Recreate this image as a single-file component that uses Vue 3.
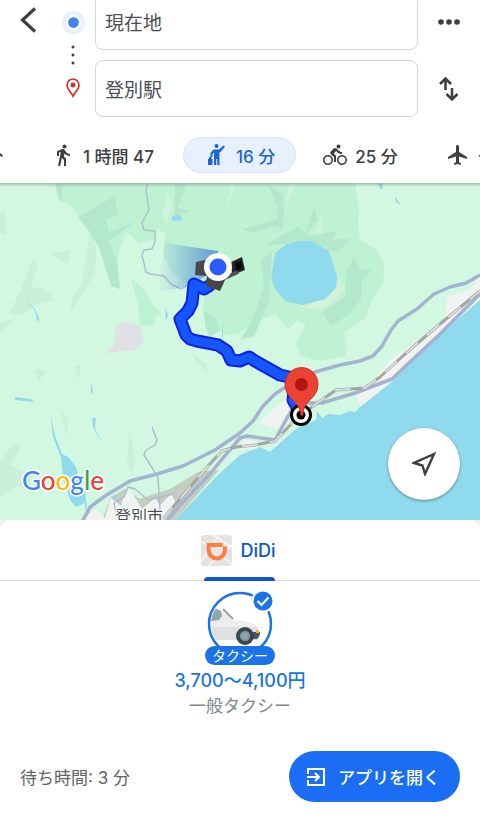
<template>
  <div class="directions">
    <header class="search-panel">
      <div class="endpoints">
        <button class="icon-btn back-btn" aria-label="戻る">
          <svg width="16" height="26" viewBox="0 0 16 26">
            <path d="M15 1.500 L2.500 13 L15 24.500" fill="none" stroke="currentColor" stroke-width="3.200" />
          </svg>
        </button>

        <div class="markers">
          <span class="origin-dot"></span>
          <svg class="dots" width="4" height="20" viewBox="0 0 4 20">
            <circle v-for="y in [2, 10, 18]" :key="y" cx="2" :cy="y" r="1.5" fill="#3c4043" />
          </svg>
          <svg width="14" height="20" viewBox="0 0 14 20">
            <path d="M7 18 C5 14 1 11 1 7 A6 6 0 0 1 13 7 C13 11 9 14 7 18 Z" fill="none" stroke="#d93025" stroke-width="1.7" />
            <circle cx="7" cy="7" r="2.5" fill="#d93025" />
          </svg>
        </div>

        <div class="fields">
          <input v-model="origin" type="text" aria-label="出発地" />
          <input v-model="destination" type="text" aria-label="目的地" />
        </div>

        <div class="field-actions">
          <button class="icon-btn" aria-label="その他">
            <svg width="22" height="6" viewBox="0 0 22 6">
              <circle v-for="x in [3, 11, 19]" :key="x" :cx="x" cy="3" r="2.8" fill="currentColor" />
            </svg>
          </button>
          <button class="icon-btn" aria-label="入れ替え">
            <svg width="20" height="26" viewBox="0 0 20 26" fill="none" stroke="currentColor" stroke-width="2.6">
              <path d="M6.500 14 V2.500 M1 8 L6.500 2.500 L12 8" />
              <path d="M13 12 V23.500 M7.500 18 L13 23.500 L18.500 18" />
            </svg>
          </button>
        </div>
      </div>

      <nav class="modes">
        <button
          v-for="mode in modes"
          :key="mode.id"
          class="mode"
          :class="[mode.id, { active: mode.id === selectedMode }]"
          :aria-label="mode.name"
          @click="selectedMode = mode.id"
        >
          <svg width="24" height="24" viewBox="0 0 24 24" fill="currentColor">
            <path :d="mode.icon" />
          </svg>
          <span v-if="mode.time">{{ mode.time }}</span>
        </button>
      </nav>
    </header>

    <main class="map">
      <svg class="map-canvas" viewBox="0 183 480 337" role="img" aria-label="地図">
        <defs>
          <linearGradient id="beam" x1="0" x2="1" y1="0" y2="0">
            <stop offset="0" stop-color="#4a86df" stop-opacity="0" />
            <stop offset="1" stop-color="#3f7bdc" stop-opacity="0.75" />
          </linearGradient>
          <linearGradient id="shade" x1="0" x2="0" y1="0" y2="1">
            <stop offset="0" stop-color="#54725f" stop-opacity="0.4" />
            <stop offset="1" stop-color="#54725f" stop-opacity="0" />
          </linearGradient>
        </defs>
        <rect y="183" width="480" height="337" fill="#d2f8e1" />

        <!-- forest -->
        <g fill="#bff1d3">
          <path d="M55 183 L60 200 L73 208 L80 220 L90 232 L98 245 L104 262 L111 286 L120 289 L116 264 L121 246 L126 232 L139 243 L155 239 L158 228 L165 234 L163 255 L170 270 L190 288 L205 285 L203 310 L212 325 L225 335 L240 333 L257 321 L275 314 L288 329 L298 320 L305 325 L296 343 L300 356 L320 361 L345 356 L347 345 L344 333 L365 318 L372 300 L383 283 L384 262 L376 250 L360 240 L358 222 L359 211 L355 183 Z" />
          <path d="M131 278 L145 290 L151 302 L162 314 L155 316 L155 325 L140 326 L138 305 Z" />
        </g>
        <g fill="#b3e8cc">
          <path d="M79 217 L90 210 L115 196 L118 214 L106 220 L109 232 L137 221 L109 240 L117 262 L120 289 L111 286 L99 247 L88 230 Z" />
          <path d="M268 185 L283 194 L284 211 L282 230 L276 226 L252 233 L243 229 L278 219 L277 205 Z" />
          <path d="M265 245 L298 227 L309 236 L337 231 L332 240 L351 238 L338 252 L329 250 L312 241 L298 241 L284 244 Z" />
          <path d="M314 208 L318 220 L306 233 Z" />
          <path d="M261 260 L272 252 L269 300 L254 337 L240 339 L250 325 L264 288 Z" />
          <path d="M354 257 L361 270 L372 270 L362 280 L361 299 L350 314 L330 326 L323 312 L345 297 L347 270 Z" />
          <path d="M175 184 L186 184 L178 208 L190 211 L174 217 Z" />
          <path d="M203 310 L216 318 L220 330 L210 337 L206 329 Z" />
          <path d="M55 183 L63 183 L62 202 L58 198 Z" />
        </g>
        <g fill="#c9f0d9">
          <path d="M90 230 L96 248 L95 273 L71 312 L72 297 L82 283 Z" />
          <path d="M50 254 L70 250 L69 264 Z" />
          <path d="M32 259 L38 266 L31 288 L43 287 L55 300 L35 305 L22 315 L10 313 L23 285 Z" />
          <path d="M0 213 L5 212 L6 235 L0 233 Z M0 323 L15 319 L0 333 Z" />
          <path d="M35 369 L46 371 L39 381 Z M75 367 L82 365 L78 381 Z" />
          <path d="M61 409 L68 420 L67 439 Z M130 432 L135 461 L132 476 L127 460 Z" />
          <path d="M15 442 L22 446 L10 465 L29 474 L32 490 L16 486 L0 496 L0 461 Z" />
          <path d="M187 350 L207 364 L207 373 Z" />
        </g>
        <g fill="#cdf5db">
          <path d="M167 195 L173 202 L167 224 L162 217 Z M236 184 L226 210 L231 184 Z" />
          <path d="M323 213 L322 234 L314 233 Z M296 184 L285 206 L288 184 Z" />
        </g>

        <path d="M115 329 L118 324 L127 322 L138 325 L142 332 L143 344 L137 346 L136 350 L103 353 L114 346 Z" fill="#dfe1e4" />

        <!-- lake and small ponds -->
        <path d="M340 280 L345 289 L334 301 L323 308 L310 309 L301 306 L325 296 Z" fill="#d4f2d6" />
        <g fill="#90daee">
          <path d="M275 253 L287 244 L298 241 L312 241 L329 251 L333 264 L337 276 L336 288 L325 299 L303 305 L285 301 L275 289 L271 278 Z" />
          <path d="M172 216 L180 215 L183 220 L172 221 Z" />
          <path d="M25 299 L35 309 L39 318 L38 323 L35 311 Z M165 308 L168 315 L166 321 Z M222 315 L223 337 L222 340 Z" />
          <path d="M378 183 L382 184 L383 189 L380 189 Z M395 196 L401 206 L396 202 Z" />
          <path d="M15 397 L30 399 L35 402 L15 400 Z M91 382 L93 392 L91 394 Z M92 418 L96 418 L95 428 L102 443 L93 427 Z" />
          <path d="M50 410 L52 422 L55 436 L62 454 L68 457 L76 467 L79 479 L85 493 L87 506 L85 512 L85 503 L76 507 L70 500 L63 478 L61 457 L53 437 Z" />
        </g>

        <!-- coastline -->
        <path d="M480 300 L423 350 L392 382 L360 407 L355 412 L350 411 L340 415 L328 414 L322 418 L317 411 L316 420 L297 428 L270 452 L260 447 L240 455 L218 475 L175 520 L480 520 Z" fill="#90daee" />

        <!-- built-up areas -->
        <g fill="#f1f2f2">
          <path d="M480 276 L470 290 L447 296 L445 318 L425 335 L404 350 L392 358 L378 374 L369 386 L357 395 L360 407 L392 381 L424 349 L480 299 Z" />
          <path d="M258 423 L288 396 L292 412 L288 423 L276 429 Z" />
          <path d="M240 450 L244 439 L260 443 L253 448 Z" />
        </g>
        <path d="M86 516 L94 508 L103 518 L111 497 L125 489 L140 499 L154 494 L170 489 L200 471 L219 470 L175 520 L84 520 Z" fill="#c3cdc1" />
        <path d="M84 520 L94 508 L105 518 L111 498 L121 506 L124 495 L130 489 L142 509 L155 498 L160 505 L172 493 L178 502 L165 520 Z" fill="#f1f2f2" />
        <path d="M111 497 L117 494 L116 499 Z" fill="#90daee" />

        <!-- roads -->
        <g fill="none" stroke="#a3b3d1" stroke-linejoin="round">
          <path d="M82 522 L90 507 L105 496 L130 481 L157 474 L183 466 L215 450 L240 433 L253 421 L263 406 L275 394 L287 386 L315 372 L340 365 L360 361 L373 356 L382 346 L391 330 L398 321 L417 309 L434 294 L450 287 L466 283 L480 275" stroke-width="3.500" />
          <path d="M166 522 L180 505 L209 475 L228 452 L240 438 L247 436 L275 440 L287 418 L296 403 L322 403 L355 393 L392 379 L412 360 L440 334 L480 294" stroke-width="3.500" />
          <path d="M148 183 L146 190 L149 210 L142 223 L144 230 L155 231 L155 242 L152 249 L144 250 L142 255 L146 272 L150 274 L164 276 L171 284 L181 289 L192 283" stroke="#aebfce" stroke-width="1.400" />
          <path d="M152 427 L157 440 L155 445 L146 450 L144 455 L151 466 L158 478 L160 510 M116 512 L114 503 L124 497 L128 487 L135 489 L148 500 L173 494 L177 504" stroke="#aebcce" stroke-width="1.400" />
        </g>
        <g fill="none" stroke-linejoin="round">
          <path :d="railway" stroke="#a4a6a6" stroke-width="3" />
          <path :d="railway" stroke="#e3e4e4" stroke-width="1.600" stroke-dasharray="16 12" />
        </g>

        <text class="city" x="115" y="522">登別市</text>

        <!-- heading beam, route -->
        <path d="M218 251 L165 243 L158 292 L190 286 L216 269 Z" fill="url(#beam)" />
        <g fill="none" stroke-linejoin="round" stroke-linecap="round">
          <path :d="route" stroke="#1220dd" stroke-width="13" />
          <path :d="route" stroke="#1557ff" stroke-width="9" />
        </g>

        <!-- vehicle and current position -->
        <path d="M196 262 L205 260 L207 276 L195 275 Z" fill="#47494b" />
        <path d="M207 274 L225 280 L220 291 L206 286 Z" fill="#454646" />
        <path d="M229 263 L242 257 L245 270 L233 275 Z" fill="#242526" />
        <path d="M235 263 L241 261 L243 268 L236 271 Z" fill="#080808" />
        <path d="M220 280 L238 272" stroke="#4e5152" stroke-width="4" />
        <circle cx="218" cy="267" r="14" fill="#fff" />
        <circle cx="218" cy="267" r="8.500" fill="#285cff" />

        <!-- destination -->
        <circle cx="301" cy="415" r="9.500" fill="#fff" stroke="#000" stroke-width="3" />
        <circle cx="301" cy="415" r="4.500" fill="#000" />
        <path d="M301 415 C299 399 285 400 285 384 A16.300 16.300 0 0 1 318 384 C318 400 303 399 303 415 Q302 416 301 415 Z" fill="#ea4335" stroke="#c5221f" stroke-width="0.800" />
        <circle cx="301.500" cy="384.500" r="6.500" fill="#b31412" />

        <text class="google" x="22" y="490">
          <tspan fill="#4285f4">G</tspan><tspan fill="#ea4335">o</tspan><tspan fill="#fbbc04">o</tspan><tspan fill="#4285f4">g</tspan><tspan fill="#34a853">l</tspan><tspan fill="#ea4335">e</tspan>
        </text>
        <rect y="183" width="480" height="4" fill="url(#shade)" />
      </svg>

      <button class="locate-btn" aria-label="現在地を表示">
        <svg width="24" height="24" viewBox="0 0 24 24">
          <path d="M22 2 L2 11 L10.500 13.500 L13 22 Z" fill="none" stroke="currentColor" stroke-width="2.400" />
        </svg>
      </button>
    </main>

    <section class="sheet-wrap">
      <div class="sheet">
        <div class="provider-tabs">
          <button class="provider">
            <svg width="31" height="31" viewBox="0 0 31 31">
              <rect width="31" height="31" rx="3" fill="#e3e3e3" />
              <path d="M0 6 L31 29 M0 27 L18 0 M7 31 L31 10 M12 0 L31 12" stroke="#f8f8f8" stroke-width="1.500" fill="none" />
              <path d="M8 10 H21.500 V13 H24 C24 26 8 26 8 14 Z" fill="#e9e9e9" />
              <path d="M21.500 10 H7.500 V14 C7.500 26.500 24 26.500 24 14 V11.500" fill="none" stroke="#ff7f41" stroke-width="4" />
            </svg>
            <span>DiDi</span>
          </button>
        </div>

        <button class="ride">
          <span class="ride-picture">
            <svg width="68" height="64" viewBox="0 0 68 64">
              <defs>
                <clipPath id="ride-clip"><circle cx="34" cy="33" r="29" /></clipPath>
              </defs>
              <circle cx="34" cy="33" r="31" fill="#fff" stroke="#1a73e8" stroke-width="2.500" />
              <g clip-path="url(#ride-clip)">
                <path d="M0 18 L10 17 L17 20 L28 29 C40 30 49 32 51 36 V49 H0 Z" fill="#ededed" />
                <path d="M0 36 H52 V49 H0 Z" fill="#e0e0e0" />
                <path d="M0 20 L10 18 L15 20 L16 25 L13 29 L6 30 H0 Z" fill="#94a3aa" />
                <path d="M17 18 L27 28" stroke="#94a3aa" stroke-width="1.800" />
                <path d="M43 41 H54 Q54 46 51 48 H42 Z" fill="#455a64" />
                <path d="M50 39 H53 V42 H50 Z" fill="#fbb03b" />
                <circle cx="39" cy="45" r="9" fill="#37474f" />
                <circle cx="39" cy="45" r="4.500" fill="#90a4ae" stroke="#78909c" stroke-width="1.500" />
              </g>
              <circle cx="57" cy="10" r="11.500" fill="#fff" />
              <circle cx="57" cy="10" r="9.500" fill="#1a73e8" />
              <path d="M51.500 10 L55.500 14 L62.500 6.500" fill="none" stroke="#fff" stroke-width="2.200" />
            </svg>
            <span class="ride-badge">タクシー</span>
          </span>
          <span class="ride-price">3,700～4,100円</span>
          <span class="ride-name">一般タクシー</span>
        </button>

        <footer class="sheet-footer">
          <span class="wait">待ち時間: 3 分</span>
          <button class="open-btn">
            <svg width="20" height="20" viewBox="0 0 20 20" fill="none" stroke="currentColor" stroke-width="2">
              <path d="M2 7 V2 H18 V18 H2 V13" />
              <path d="M1 10 H12.500 M9 6 L13 10 L9 14" />
            </svg>
            アプリを開く
          </button>
        </footer>
      </div>
    </section>
  </div>
</template>

<script setup>
import { ref } from 'vue';

const origin = ref('現在地');
const destination = ref('登別駅');
const selectedMode = ref('taxi');

const modes = [
  {
    id: 'transit',
    name: '公共交通機関',
    time: '',
    icon: 'M15 8 L19 8.500 L24 12.500 L23 14 L18 11 L15 11 Z'
  },
  {
    id: 'walk',
    name: '徒歩',
    time: '1 時間 47',
    icon: 'M13.5 5.5c1.1 0 2-.9 2-2s-.9-2-2-2-2 .9-2 2 .9 2 2 2zM9.8 8.9L7 23h2.1l1.8-8 2.1 2v6h2v-7.5l-2.1-2 .6-3C14.8 12 16.8 13 19 13v-2c-1.900 0-3.500-1-4.300-2.400l-1-1.600c-.4-.6-1-1-1.700-1-.3 0-.5.1-.8.1L6 8.300V13h2V9.600l1.800-.7'
  },
  {
    id: 'taxi',
    name: 'タクシー',
    time: '16 分',
    icon: 'M12.500 1a2 2 0 1 1 0 4a2 2 0 1 1 0-4z M19.500 2.500l1.500 1-4 5-1.500 1V22h-2.200v-6h-1v6H10V9.500L8.500 11v3h-2v-4L9.500 6.500h5.500z M4 16h1v-2h2.500v2H8.500v6H4z'
  },
  {
    id: 'bike',
    name: '自転車',
    time: '25 分',
    icon: 'M15.5 5.5c1.1 0 2-.9 2-2s-.9-2-2-2-2 .9-2 2 .9 2 2 2zM5 12c-2.800 0-5 2.200-5 5s2.200 5 5 5 5-2.200 5-5-2.200-5-5-5zm0 8.500c-1.900 0-3.500-1.600-3.500-3.500s1.600-3.500 3.500-3.500 3.500 1.600 3.500 3.500-1.600 3.500-3.500 3.500zm5.800-10l2.400-2.400.8.8c1.300 1.300 3 2.100 5.100 2.100V9c-1.500 0-2.700-.6-3.600-1.500l-1.900-1.900c-.5-.4-1-.6-1.600-.6s-1.100.2-1.400.6L7.800 8.400c-.4.4-.6.9-.6 1.400 0 .6.2 1.100.6 1.400L11 14v5h2v-6.200l-2.200-2.300zM19 12c-2.800 0-5 2.200-5 5s2.200 5 5 5 5-2.200 5-5-2.200-5-5-5zm0 8.500c-1.900 0-3.500-1.600-3.500-3.500s1.600-3.500 3.500-3.500 3.500 1.600 3.500 3.500-1.600 3.500-3.500 3.500z'
  },
  {
    id: 'flight',
    name: '飛行機',
    time: '--',
    icon: 'M21 16v-2l-8-5V3.500c0-.83-.67-1.500-1.500-1.500S10 2.670 10 3.500V9l-8 5v2l8-2.500V19l-2 1.500V22l3.500-1 3.500 1v-1.500L13 19v-5.500l8 2.500z'
  }
];

const route = 'M209 286 L204 289 L194 284 L192 303 L188 311 L180 319 L186 335 L190 339 L197 341 L218 345 L227 351 L231 360 L240 361 L249 357 L255 361 L280 375 L289 377 L295 381 L293 400 L299 411';
const railway = 'M162 520 L185 493 L208 466 L222 451 L236 447 L255 445 L275 441 L297 418 L320 401 L336 390 L365 388 L380 377 L405 354 L440 324 L480 291';
</script>

<style>
body {
  margin: 0;
  background: #fff;
}
</style>

<style scoped>
.directions {
  display: flex;
  flex-direction: column;
  min-height: 100vh;
  overflow: hidden;
  font-family: Inter, 'Noto Sans CJK JP', sans-serif;
  color: #3c4043;
}

button {
  font: inherit;
  color: inherit;
  background: none;
  border: none;
  padding: 0;
  cursor: pointer;
}

svg {
  display: block;
  flex-shrink: 0;
}

.search-panel {
  background: #fff;
  padding-bottom: 10px;
}

/* the first field is scrolled slightly past the top edge */
.endpoints {
  display: grid;
  grid-template-columns: 56px 32px 1fr 62px;
  margin-top: -7px;
}

.back-btn {
  align-self: start;
  padding: 14px 0 0 20px;
}

.markers {
  display: flex;
  flex-direction: column;
  align-items: center;
  padding: 18px 0 0 2px;
}

.origin-dot {
  width: 11px;
  height: 11px;
  margin: 4px;
  border: 2px solid #fff;
  border-radius: 50%;
  background: #4285f4;
  background-clip: padding-box;
  box-shadow: 0 0 0 4px #e8f0fe;
}

.dots {
  margin: 11px 0 13px;
}

.fields {
  display: flex;
  flex-direction: column;
  gap: 10px;
  padding-left: 7px;
}

.fields input {
  box-sizing: border-box;
  width: 100%;
  height: 57px;
  padding: 0 9px;
  border: 1px solid #d3d6da;
  border-radius: 8px;
  font: inherit;
  font-size: 19px;
  color: #4a4e52;
  background: #fff;
}

.field-actions {
  display: grid;
  grid-template-rows: 57px 57px;
  row-gap: 10px;
}

.field-actions .icon-btn {
  display: flex;
  align-items: center;
  justify-content: center;
}

.modes {
  display: flex;
  align-items: center;
  overflow: hidden;
  margin-top: 20px;
}

.mode {
  box-sizing: border-box;
  display: flex;
  align-items: center;
  flex-shrink: 0;
  gap: 8px;
  height: 36px;
  padding: 0 20px;
  border: 1px solid transparent;
  border-radius: 18px;
  font-size: 17px;
  font-weight: 500;
  white-space: nowrap;
}

.mode.transit {
  justify-content: flex-end;
  width: 3px;
  padding: 0;
  border: none;
  border-radius: 0;
  overflow: hidden;
  margin-right: 27px;
}

.mode.active {
  margin: 0 6px 0 8px;
  background: #e8f0fe;
  border-color: #d2e3fc;
  color: #1967d2;
}

.mode.flight {
  margin-left: 6px;
}

.map {
  position: relative;
}

.map-canvas {
  width: 100%;
  height: auto;
}

.city {
  font-size: 16px;
  fill: #4a4e52;
  stroke: #fff;
  stroke-width: 2px;
  paint-order: stroke;
}

.google {
  font-family: Lato, sans-serif;
  font-size: 26px;
  font-weight: 500;
  stroke: #fff;
  stroke-width: 3px;
  stroke-linejoin: round;
  paint-order: stroke;
}

.locate-btn {
  position: absolute;
  right: 20px;
  bottom: 20px;
  display: flex;
  align-items: center;
  justify-content: center;
  width: 72px;
  height: 72px;
  border-radius: 50%;
  background: #fff;
  box-shadow: 0 1px 3px rgba(0, 0, 0, 0.4);
}

.sheet-wrap {
  background: #f1f1f1;
}

.sheet {
  background: #fff;
  border-radius: 10px 10px 0 0;
}

.provider-tabs {
  display: flex;
  justify-content: center;
  border-bottom: 1px solid #dadce0;
}

.provider {
  position: relative;
  display: flex;
  align-items: center;
  gap: 8px;
  height: 60px;
  margin-right: 3px;
  font-size: 18px;
  font-weight: 500;
  color: #0b57d0;
}

.provider::after {
  content: '';
  position: absolute;
  left: 3px;
  right: 1px;
  bottom: -1px;
  height: 4px;
  border-radius: 4px 4px 0 0;
  background: #0b57d0;
}

.ride {
  display: flex;
  flex-direction: column;
  align-items: center;
  margin: 10px auto 0;
}

.ride-picture {
  display: flex;
  flex-direction: column;
  align-items: center;
}

.ride-badge {
  z-index: 1;
  margin-top: -9px;
  padding: 0 7px;
  border-radius: 10px;
  background: #1a73e8;
  color: #fff;
  font-size: 14px;
  line-height: 19px;
}

.ride-price {
  margin-top: 4px;
  font-size: 18px;
  font-weight: 500;
  line-height: 24px;
  color: #1a73e8;
}

.ride-name {
  font-size: 17px;
  line-height: 26px;
  color: #80868b;
}

.sheet-footer {
  display: flex;
  align-items: center;
  justify-content: space-between;
  padding: 32px 20px 16px;
}

.wait {
  font-size: 17px;
  color: #5f6368;
}

.open-btn {
  display: flex;
  align-items: center;
  gap: 12px;
  height: 51px;
  padding: 0 20px 0 17px;
  border-radius: 26px;
  background: #1b6ef3;
  color: #fff;
  font-size: 17px;
  font-weight: 500;
}
</style>
